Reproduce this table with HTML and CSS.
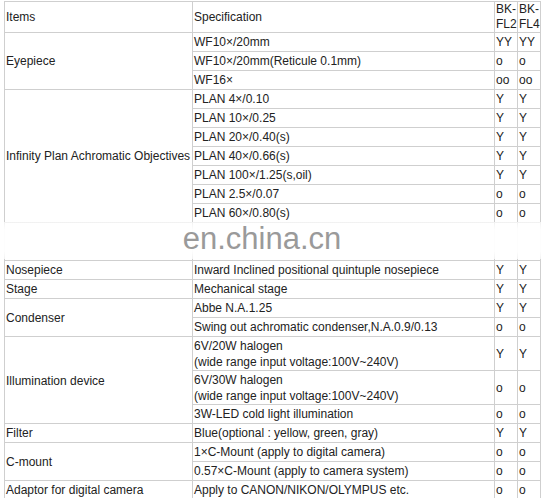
FILE: index.html
```html
<!DOCTYPE html>
<html>
<head>
<meta charset="utf-8">
<link rel="stylesheet" href="styles.css">
</head>
<body>
<div class="page">
<table class="spec">
  <colgroup>
    <col class="c1"><col class="c2"><col class="c3"><col class="c4">
  </colgroup>
  <tr class="head">
    <td>Items</td>
    <td>Specification</td>
    <td>BK-<br>FL2</td>
    <td>BK-<br>FL4</td>
  </tr>
  <tr><td rowspan="3">Eyepiece</td><td>WF10×/20mm</td><td>YY</td><td>YY</td></tr>
  <tr><td>WF10×/20mm(Reticule 0.1mm)</td><td>o</td><td>o</td></tr>
  <tr><td>WF16×</td><td>oo</td><td>oo</td></tr>
  <tr><td rowspan="7">Infinity Plan Achromatic Objectives</td><td>PLAN 4×/0.10</td><td>Y</td><td>Y</td></tr>
  <tr><td>PLAN 10×/0.25</td><td>Y</td><td>Y</td></tr>
  <tr><td>PLAN 20×/0.40(s)</td><td>Y</td><td>Y</td></tr>
  <tr><td>PLAN 40×/0.66(s)</td><td>Y</td><td>Y</td></tr>
  <tr><td>PLAN 100×/1.25(s,oil)</td><td>Y</td><td>Y</td></tr>
  <tr><td>PLAN 2.5×/0.07</td><td>o</td><td>o</td></tr>
  <tr><td>PLAN 60×/0.80(s)</td><td>o</td><td>o</td></tr>
  <tr class="gap"><td></td><td></td><td></td><td></td></tr>
  <tr><td>Nosepiece</td><td>Inward Inclined positional quintuple nosepiece</td><td>Y</td><td>Y</td></tr>
  <tr><td>Stage</td><td>Mechanical stage</td><td>Y</td><td>Y</td></tr>
  <tr><td rowspan="2">Condenser</td><td>Abbe N.A.1.25</td><td>Y</td><td>Y</td></tr>
  <tr><td>Swing out achromatic condenser,N.A.0.9/0.13</td><td>o</td><td>o</td></tr>
  <tr class="two"><td rowspan="3">Illumination device</td><td>6V/20W halogen<br>(wide range input voltage:100V~240V)</td><td>Y</td><td>Y</td></tr>
  <tr class="two"><td>6V/30W halogen<br>(wide range input voltage:100V~240V)</td><td>o</td><td>o</td></tr>
  <tr><td>3W-LED cold light illumination</td><td>o</td><td>o</td></tr>
  <tr><td>Filter</td><td>Blue(optional : yellow, green, gray)</td><td>Y</td><td>Y</td></tr>
  <tr><td rowspan="2">C-mount</td><td>1×C-Mount (apply to digital camera)</td><td>o</td><td>o</td></tr>
  <tr><td>0.57×C-Mount (apply to camera system)</td><td>o</td><td>o</td></tr>
  <tr><td>Adaptor for digital camera</td><td>Apply to CANON/NIKON/OLYMPUS etc.</td><td>o</td><td>o</td></tr>
</table>
<div class="watermark"><span class="wm-text">en.china.cn</span></div>
</div>
</body>
</html>
```

FILE: styles.css
```css
html, body {
  margin: 0;
  padding: 0;
  background: #ffffff;
}

.page {
  position: relative;
  width: 544px;
  height: 498px;
  overflow: hidden;
  padding: 1px 0 0 4px;
  box-sizing: border-box;
}

.spec {
  border-collapse: collapse;
  table-layout: fixed;
  width: 537px;
  font-family: "Liberation Sans", Arial, sans-serif;
  font-size: 12px;
  color: #222222;
}

.c1 { width: 188px; }
.c2 { width: 302px; }
.c3 { width: 23px; }
.c4 { width: 23px; }

.spec td {
  border: 1px solid #cfcfcf;
  padding: 1px 1px 1px 1px;
  line-height: 16px;
  vertical-align: middle;
  white-space: nowrap;
  overflow: hidden;
}

.spec .head td {
  line-height: 15px;
  padding-top: 0;
  padding-bottom: 0;
}

.spec .two td {
  padding-bottom: 0;
}

.spec .gap td {
  height: 35px;
}

.watermark {
  position: absolute;
  left: 0;
  top: 222px;
  width: 544px;
  height: 37px;
  background: linear-gradient(to bottom, rgba(255,255,255,0.7) 0%, rgba(255,255,255,0.97) 20%, rgba(255,255,255,0.97) 80%, rgba(255,255,255,0.7) 100%);
  display: flex;
  justify-content: center;
  align-items: flex-start;
}

.wm-text {
  font-family: "Liberation Sans", Arial, sans-serif;
  font-size: 31px;
  line-height: 31px;
  color: #9a9a9a;
  margin-left: -20px;
  margin-top: 1px;
}
```
